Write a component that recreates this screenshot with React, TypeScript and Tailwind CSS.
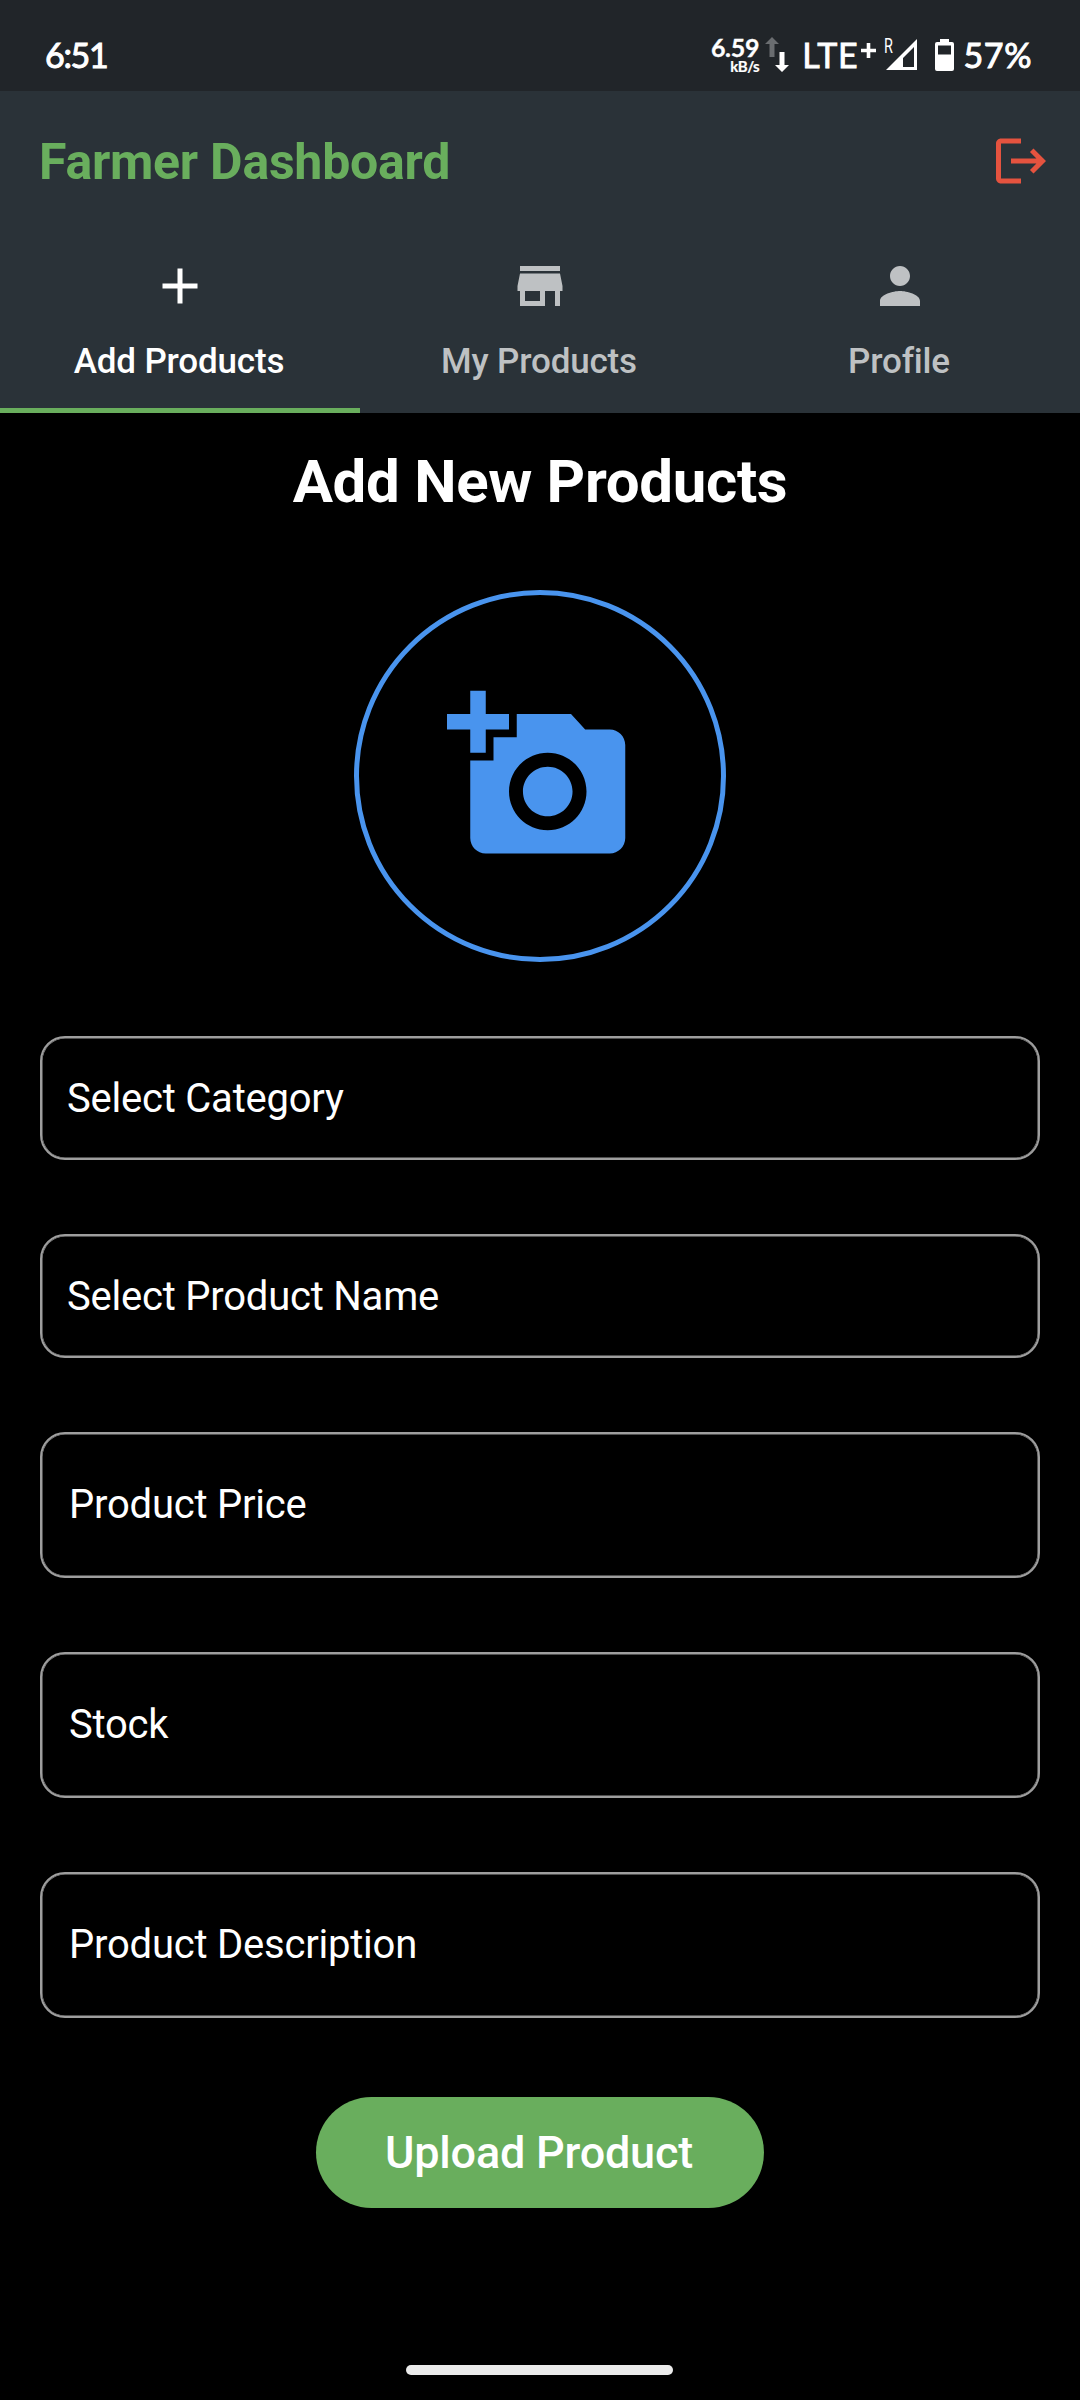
import type { ReactNode } from "react";

function StatusBar() {
  return (
    <div className="flex h-[91px] items-start justify-between bg-[#212529] font-['Lato',sans-serif] text-white">
      <span className="ml-[45px] mt-[35px] text-[34px] leading-[40px] tracking-[-1.3px] [-webkit-text-stroke:1px_#fff]">6:51</span>
      <div className="mr-[48px] mt-[35px] flex h-[40px] items-start">
        <div className="flex flex-col items-end font-bold">
          <span className="text-[25px] leading-[24px] tracking-[-0.3px] [-webkit-text-stroke:0.3px_#fff]">6.59</span>
          <span className="text-[15px] leading-[14px] tracking-[-0.5px] [-webkit-text-stroke:0.2px_#fff]">kB/s</span>
        </div>
        <svg className="ml-[6px] mt-[2px] h-[36px] w-[24px]" viewBox="0 0 24 36">
          <path d="M7 0l7 7H9.5v13h-5V7H0z" fill="#6a6d70" />
          <path d="M14.500 15h5v13H24l-7 7-7-7h4.500z" fill="#fff" />
        </svg>
        <span className="ml-[13px] text-[34px] leading-[40px] tracking-[0.8px] [-webkit-text-stroke:0.8px_#fff]">LTE</span>
        <svg className="ml-[2px] mt-[8px] h-[15px] w-[15px]" viewBox="0 0 15 15">
          <path d="M7.500 0v15M0 7.500h15" stroke="#fff" strokeWidth="3.6" />
        </svg>
        <div className="relative ml-[9px] h-[36px] w-[32px]">
          <span className="absolute -left-px top-px origin-left font-['Roboto',sans-serif] text-[20px] leading-[20px] [transform:scaleX(0.72)]">R</span>
          <svg className="absolute left-0 top-[4px] h-[31px] w-[32px]" viewBox="0 0 32 31">
            <path fillRule="evenodd" d="M32 0v31H1zM29 8L18 19V28h11z" fill="#fff" />
          </svg>
        </div>
        <svg className="ml-[18px] mt-[4px] h-[32px] w-[19px]" viewBox="0 0 19 32">
          <path fillRule="evenodd" d="M5 0h9v3h3a2 2 0 0 1 2 2v25a2 2 0 0 1-2 2H2a2 2 0 0 1-2-2V5a2 2 0 0 1 2-2h3zM3 6.500v9h13v-9z" fill="#fff" />
        </svg>
        <span className="ml-[10px] text-[34px] leading-[40px] tracking-[0.6px] [-webkit-text-stroke:1px_#fff]">57%</span>
      </div>
    </div>
  );
}

function Tab({ label, active, children }: { label: string; active?: boolean; children: ReactNode }) {
  return (
    <button
      className={
        active
          ? "flex h-full flex-col items-center border-b-[5px] border-[#69ae5d] text-white"
          : "flex h-full flex-col items-center border-b-[5px] border-transparent text-[#bec1c3]"
      }
    >
      <svg className="mt-[25px] h-[60px] w-[60px]" viewBox="0 0 24 24" fill="currentColor">
        {children}
      </svg>
      <span className="mr-[2px] mt-[25px] text-[35px] font-medium leading-[41px] tracking-[-0.17px]">{label}</span>
    </button>
  );
}

function SelectField({ label }: { label: string }) {
  return (
    <div className="flex h-[124px] items-center rounded-[25px] border-2 border-[#9e9e9e] pl-[25px] pt-[2px] text-[40px] tracking-[-0.22px] shadow-[inset_0_0_0_0.5px_#9e9e9e]">
      {label}
    </div>
  );
}

function TextField({ label }: { label: string }) {
  return (
    <div className="flex h-[146px] items-center rounded-[25px] border-2 border-[#9e9e9e] pl-[27px] text-[40px] tracking-[-0.22px] shadow-[inset_0_0_0_0.5px_#9e9e9e]">
      {label}
    </div>
  );
}

export default function App() {
  return (
    <div className="flex h-[2400px] w-[1080px] flex-col overflow-hidden bg-black font-['Roboto',sans-serif] text-white">
      <StatusBar />
      <header className="flex h-[322px] flex-col bg-[#2a3238]">
        <div className="flex h-[140px] items-center justify-between pl-[39px] pr-[29px]">
          <h1 className="mt-px text-[50px] font-bold leading-[60px] tracking-[-0.23px] text-[#69ae5d]">Farmer Dashboard</h1>
          <svg className="mb-px h-[60px] w-[60px]" viewBox="0 0 24 24" fill="#e5533f">
            <path d="M17 7l-1.410 1.410L18.170 11H8v2h10.170l-2.580 2.580L17 17l5-5zM4 5h8V3H4c-1.100 0-2 .9-2 2v14c0 1.100.9 2 2 2h8v-2H4V5z" />
          </svg>
        </div>
        <nav className="grid flex-1 grid-cols-3">
          <Tab label="Add Products" active>
            <path d="M19 13h-6v6h-2v-6H5v-2h6V5h2v6h6v2z" />
          </Tab>
          <Tab label="My Products">
            <path d="M20 4H4v2h16V4zm1 10v-2l-1-5H4l-1 5v2h1v6h10v-6h4v6h2v-6h1zm-9 4H6v-4h6v4z" />
          </Tab>
          <Tab label="Profile">
            <path d="M12 12c2.210 0 4-1.790 4-4s-1.790-4-4-4-4 1.790-4 4 1.790 4 4 4zm0 2c-2.670 0-8 1.340-8 4v2h16v-2c0-2.660-5.330-4-8-4z" />
          </Tab>
        </nav>
      </header>
      <main className="flex flex-1 flex-col items-center px-[40px]">
        <h2 className="mt-[34px] text-[60px] font-bold leading-[70px] tracking-[-0.32px]">Add New Products</h2>
        <button className="mt-[73px] flex h-[372px] w-[372px] shrink-0 items-center justify-center rounded-full border-[5px] border-[#4994ee]">
          <svg className="h-[186px] w-[186px]" viewBox="0 0 24 24" fill="#4994ee">
            <path d="M3 4V1h2v3h3v2H5v3H3V6H0V4h3zm3 6V7h3V4h7l1.830 2H21c1.100 0 2 .9 2 2v12c0 1.100-.9 2-2 2H5c-1.100 0-2-.9-2-2V10h3zm7 9c2.760 0 5-2.240 5-5s-2.240-5-5-5-5 2.240-5 5 2.240 5 5 5zm-3.200-5c0 1.770 1.430 3.200 3.200 3.200s3.200-1.430 3.200-3.200-1.430-3.200-3.200-3.200-3.200 1.430-3.200 3.200z" />
          </svg>
        </button>
        <form className="mt-[74px] flex w-full flex-col gap-[74px]">
          <SelectField label="Select Category" />
          <SelectField label="Select Product Name" />
          <TextField label="Product Price" />
          <TextField label="Stock" />
          <TextField label="Product Description" />
        </form>
        <button className="mt-[78.5px] flex h-[111px] w-[448px] shrink-0 items-center justify-center rounded-full bg-[#69ae5d] pr-[2px] pt-px text-[45px] font-medium tracking-[-0.22px]">
          Upload Product
        </button>
        <div className="mb-[25px] mr-px mt-auto h-[10px] w-[267px] rounded-full bg-[#ebebeb]" />
      </main>
    </div>
  );
}
